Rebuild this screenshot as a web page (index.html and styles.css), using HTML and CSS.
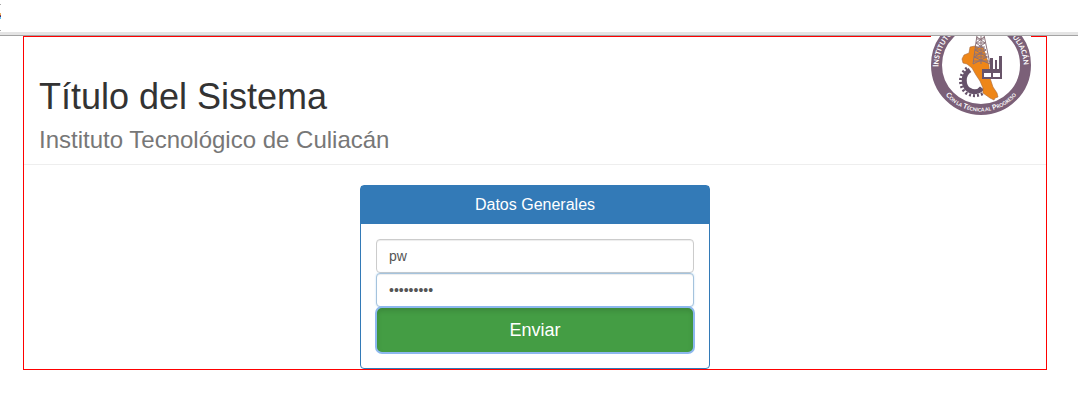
FILE: index.html
```html
<!DOCTYPE html>
<html lang="es">
<head>
<meta charset="utf-8">
<meta name="viewport" content="width=device-width, initial-scale=1">
<title>Título del Sistema</title>
<link rel="stylesheet" href="styles.css">
</head>
<body>
<div class="toolbar">
  <svg class="toolbar-mark" width="1" height="32" viewBox="0 0 1 32" aria-hidden="true">
    <path d="M0 4h1v1H0zM0 30h1v1H0z" fill="#aaa"/>
    <path d="M0 13h1v2H0z" fill="#f0b060"/>
    <path d="M0 15h1v1H0z" fill="#a04030"/>
    <path d="M0 16h1v1H0z" fill="#303080"/>
    <path d="M0 17h1v2H0z" fill="#60c0f0"/>
  </svg>
</div>
<main class="container">
  <header class="page-header">
    <div class="titles">
      <h1 class="title">Título del Sistema</h1>
      <p class="subtitle">Instituto Tecnológico de Culiacán</p>
    </div>
    <svg class="logo" viewBox="0 21 100 79" role="img" aria-label="Instituto Tecnológico de Culiacán">
      <defs>
        <path id="arc-top" d="M7.500 52A42.500 42.500 0 0 1 92.500 50"/>
        <path id="arc-bottom" d="M3.500 50A46.500 46.500 0 0 0 96.500 50"/>
      </defs>
      <rect y="21" width="100" height="79" fill="#fff"/>
      <circle cx="50" cy="50" r="44.500" fill="none" stroke="#7b6078" stroke-width="11"/>
      <path class="gear-body" d="M39 55C31 60 32 71 38 75C43 78 48 77 51 73"/>
      <path class="gear-teeth" d="M36 53C27 60 28 72 35 78C41 82 48 81 53 78"/>
      <path d="M39 32l5-1 4 2 4-1 3 9 3 9 1 13 3 9 4 6 1 4-3 1-1 2-4-2-7-5 0-5-3-7-4-6-4-7-5-4-4-1-1-4 2-4 5-2z" fill="#ee8618" stroke="#a96a3d" stroke-width=".6"/>
      <path class="tower" d="M46 20L42 49M53 20L59 49M50 20V49M46 22L54 28L44 35L56 42L42 49M53 22L45 28L55 35L43 42L59 49M46 24h7M45 28h9M44 32h10M44 35h11M43 39h13M43 42h14M42 46h16"/>
      <path d="M51 54h8V43h3v11h2V45h2v9h2V41h3v23H51z" fill="#685469"/>
      <path d="M53 58h7v4h-7zM62 58h7v4h-7z" fill="#fff"/>
      <text class="seal-text seal-top"><textPath href="#arc-top">I<tspan class="sc">NSTITUTO</tspan></textPath></text>
      <text class="seal-text seal-top"><textPath href="#arc-top" startOffset="100%" text-anchor="end"><tspan class="sc">ULIACÁN</tspan></textPath></text>
      <text class="seal-text seal-bottom"><textPath href="#arc-bottom" startOffset="50%" text-anchor="middle">C<tspan class="sc">ON LA</tspan> T<tspan class="sc">ÉCNICA AL</tspan> P<tspan class="sc">ROGRESO</tspan></textPath></text>
    </svg>
  </header>
  <form class="panel">
    <h2 class="panel-heading">Datos Generales</h2>
    <div class="panel-body">
      <input class="field" type="text" aria-label="Usuario" value="pw">
      <input class="field field-active" type="password" aria-label="Contraseña" value="password1">
      <button class="submit" type="button">Enviar</button>
    </div>
  </form>
</main>
</body>
</html>
```
FILE: styles.css
```css
* { box-sizing: border-box; }
body {
  margin: 0;
  background: #fff;
  color: #333;
  font-family: "Liberation Sans", Arial, sans-serif;
  font-size: 14px;
}
.toolbar {
  height: 36px;
  border-bottom: 1px solid #a3a3a3;
  box-shadow: inset 0 -3px #e4e4e4;
}
.toolbar-mark { display: block; }
.container {
  margin: 0 31px 0 23px;
  border: 1px solid #f00;
}
.page-header {
  display: flex;
  justify-content: space-between;
  align-items: flex-start;
  padding: 0 15px 11px;
  margin-bottom: 20px;
  border-bottom: 1px solid #eee;
}
.titles { padding-top: 40px; }
.title {
  margin: 0 0 10px;
  font-size: 36px;
  line-height: 40px;
  font-weight: 400;
}
.subtitle {
  margin: 0;
  font-size: 24px;
  line-height: 26px;
  color: #777;
}
.logo {
  width: 100px;
  flex: none;
  margin-top: -1px;
}
.seal-text {
  fill: #fff;
  font-family: Lato, "Open Sans", sans-serif;
  font-weight: 700;
}
.seal-top { font-size: 8px; }
.seal-top .sc { font-size: 7px; }
.seal-bottom { font-size: 7px; }
.seal-bottom .sc { font-size: 5px; }
.tower { fill: none; stroke: #8a7078; stroke-width: 1; }
.gear-body { fill: none; stroke: #66526a; stroke-width: 5; }
.gear-teeth { fill: none; stroke: #66526a; stroke-width: 3; stroke-dasharray: 2 2; }
.panel {
  width: 350px;
  max-width: 100%;
  margin: 0 auto;
  border: 1px solid #337ab7;
  border-radius: 4px;
}
.panel-heading {
  margin: 0;
  padding: 10px 15px;
  background: #337ab7;
  color: #fff;
  font-size: 16px;
  line-height: 18px;
  font-weight: 400;
  text-align: center;
}
.panel-body { padding: 15px; }
.field {
  display: block;
  width: 100%;
  height: 34px;
  padding: 6px 12px;
  border: 1px solid #ccc;
  border-radius: 4px;
  background: #fff;
  color: #555;
  font: 14px/20px "Liberation Sans", Arial, sans-serif;
  box-shadow: inset 0 1px 1px rgba(0, 0, 0, .075);
}
.field-active {
  border-color: #a5c3dd;
  box-shadow: inset 0 1px 1px rgba(0, 0, 0, .075), 0 0 2px rgba(102, 175, 233, .4);
}
.submit {
  display: block;
  width: 100%;
  height: 46px;
  padding: 10px 16px;
  border: 1px solid #398439;
  border-radius: 6px;
  outline: 2px solid #8db8ee;
  outline-offset: -1px;
  background: #449d44;
  color: #fff;
  font: 18px/24px "Liberation Sans", Arial, sans-serif;
  box-shadow: inset 0 3px 5px rgba(0, 0, 0, .125);
}
```
